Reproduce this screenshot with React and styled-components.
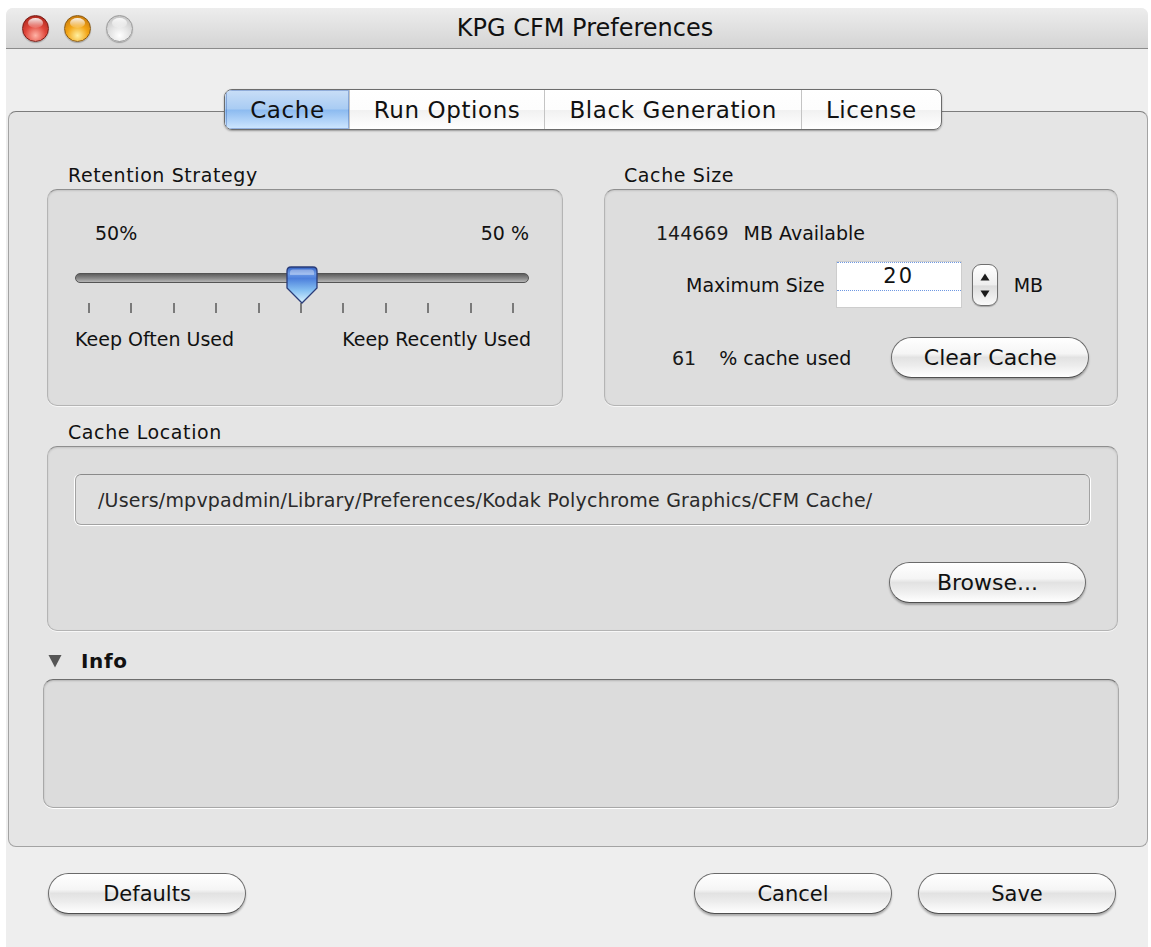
import React from "react";
import styled, { createGlobalStyle } from "styled-components";

const GlobalStyle = createGlobalStyle`
  html, body { margin: 0; padding: 0; background: #ffffff; overflow: hidden; }
  body { font-family: "DejaVu Sans", "Liberation Sans", sans-serif; color: #111; }
  * { box-sizing: border-box; }
`;

const Window = styled.div`
  margin: 8px 0 0 6px;
  width: 1142px;
  height: 960px;
  display: flex;
  flex-direction: column;
  background: #eeeeee;
  border-radius: 7px 7px 0 0;
  overflow: hidden;
`;

const TitleBar = styled.div`
  flex: none;
  height: 41px;
  display: grid;
  grid-template-columns: 1fr auto 1fr;
  align-items: center;
  padding-left: 16px;
  background: linear-gradient(#ededed, #d4d4d4);
  border-bottom: 1px solid #8b8b8b;
`;

const Lights = styled.div`
  display: flex;
  gap: 15px;
`;

const lightColors = {
  close: ["#ffb3a6", "#e0473b", "#9c1c12", "#7a1c16"],
  minimize: ["#fff0a0", "#f3a515", "#b86a08", "#8a5a12"],
  zoom: ["#ffffff", "#e2e2e2", "#b9b9b9", "#9a9a9a"],
};

const Light = styled.span`
  position: relative;
  width: 27px;
  height: 27px;
  border-radius: 50%;
  border: 1px solid ${(p) => lightColors[p.$kind][3]};
  background: radial-gradient(
    circle at 50% 78%,
    ${(p) => lightColors[p.$kind][0]} 0%,
    ${(p) => lightColors[p.$kind][1]} 45%,
    ${(p) => lightColors[p.$kind][2]} 100%
  );
  box-shadow: 0 1px 1px rgba(0, 0, 0, 0.25);
  &::after {
    content: "";
    position: absolute;
    left: 5px;
    right: 5px;
    top: 2px;
    height: 10px;
    border-radius: 50%;
    background: linear-gradient(rgba(255, 255, 255, 0.9), rgba(255, 255, 255, 0.1));
  }
`;

const Title = styled.div`
  font-size: 24px;
  color: #111;
`;

const Content = styled.div`
  flex: 1;
  display: flex;
  flex-direction: column;
  padding-top: 40px;
`;

const TabStrip = styled.div`
  position: relative;
  z-index: 1;
  align-self: center;
  margin-left: 12px;
  display: flex;
  height: 41px;
  border: 1px solid #6c6c6c;
  border-radius: 8px;
  overflow: hidden;
  box-shadow: 0 1px 2px rgba(0, 0, 0, 0.35);
  background: linear-gradient(#ffffff, #fdfdfd 50%, #f1f1f1 51%, #ffffff);
`;

const Tab = styled.div`
  display: flex;
  align-items: center;
  padding: 0 24px;
  font-size: 23px;
  letter-spacing: 0.6px;
  color: #111;
  border-left: 1px solid ${(p) => (p.$first ? "transparent" : "#c4c4c4")};
  ${(p) =>
    p.$active &&
    `
    background: linear-gradient(#c9def7 0%, #a9ccf3 48%, #8dbbf0 52%, #cfe7ff 100%);
    border-left-color: transparent;
    box-shadow: inset 0 0 0 1px rgba(40, 80, 160, 0.35);
  `}
`;

const Pane = styled.div`
  margin: -19px 0 0 2px;
  border: 1px solid #a3a3a3;
  border-top-color: #7c7c7c;
  border-radius: 8px;
  background: #e5e5e5;
  padding: 52px 29px 38px 38px;
  display: flex;
  flex-direction: column;
`;

const TopRow = styled.div`
  display: grid;
  grid-template-columns: 516px 514px;
  column-gap: 41px;
`;

const Group = styled.div`
  display: flex;
  flex-direction: column;
  margin-top: ${(p) => p.$top || 0}px;
`;

const GroupLabel = styled.div`
  font-size: 19px;
  letter-spacing: 0.6px;
  line-height: 22px;
  color: #111;
  padding-left: ${(p) => p.$indent || 21}px;
  margin-bottom: 3px;
`;

const Box = styled.div`
  height: ${(p) => p.$h}px;
  background: #dddddd;
  border: 1px solid #b4b4b4;
  border-top-color: #8f8f8f;
  border-radius: 10px;
  box-shadow: inset 0 1px 2px rgba(0, 0, 0, 0.12), 0 1px 0 rgba(255, 255, 255, 0.7);
  display: flex;
  flex-direction: column;
`;

/* Retention strategy slider */

const PercentRow = styled.div`
  display: flex;
  justify-content: space-between;
  font-size: 19px;
  line-height: 22px;
  padding: 32px 33px 0 47px;
`;

const SliderArea = styled.div`
  position: relative;
  margin: 22px 33px 0 27px;
  height: 50px;
`;

const Track = styled.div`
  margin-top: 7px;
  height: 10px;
  border-radius: 5px;
  border: 1px solid #545454;
  background: linear-gradient(#5e5e5e, #8b8b8b 55%, #b6b6b6);
`;

const Ticks = styled.div`
  display: flex;
  justify-content: space-between;
  margin-top: 20px;
  padding: 0 15px 0 13px;
`;

const Tick = styled.span`
  width: 2px;
  height: 10px;
  background: #7a7a7a;
`;

const ThumbWrap = styled.div`
  position: absolute;
  top: 0;
  width: 32px;
  height: 38px;
  margin-left: -16px;
`;

const SliderLabels = styled.div`
  display: flex;
  justify-content: space-between;
  font-size: 19px;
  line-height: 22px;
  padding: 12px 31px 0 27px;
`;

/* Cache size controls */

const InfoRow = styled.div`
  display: flex;
  align-items: center;
  gap: ${(p) => p.$gap || 0}px;
  padding-left: ${(p) => p.$indent}px;
  margin-top: ${(p) => p.$top}px;
  font-size: 19px;
  line-height: 22px;
`;

const Strong = styled.span`
  font-size: 19px;
  color: #1a1a1a;
`;

const NumberField = styled.div`
  width: 124px;
  height: 45px;
  margin-left: 12px;
  background: #ffffff;
  border-top: 1px dotted #6f98e2;
  box-shadow: 0 0 0 1px rgba(160, 160, 160, 0.25);
  display: flex;
  flex-direction: column;
`;

const FieldValue = styled.div`
  height: 28px;
  text-align: center;
  font-size: 21px;
  line-height: 26px;
  letter-spacing: 2px;
  border-bottom: 1px dotted #6f98e2;
`;

const Stepper = styled.div`
  width: 26px;
  height: 42px;
  margin: 0 16px 0 11px;
  border: 1px solid #6f6f6f;
  border-radius: 9px;
  background: linear-gradient(#ffffff, #eeeeee 50%, #dcdcdc 52%, #fafafa);
  box-shadow: 0 1px 1px rgba(0, 0, 0, 0.25);
  display: flex;
  flex-direction: column;
  align-items: center;
  justify-content: space-between;
  padding: 8px 0 7px;
`;

const AquaButton = styled.button`
  width: ${(p) => p.$w || 198}px;
  height: ${(p) => p.$h || 41}px;
  border: 1px solid #6a6a6a;
  border-bottom-color: #4f4f4f;
  border-radius: 21px;
  background: linear-gradient(
    #ffffff 0%,
    #f5f5f5 40%,
    #e2e2e2 50%,
    #ececec 70%,
    #ffffff 100%
  );
  box-shadow: 0 2px 2px rgba(0, 0, 0, 0.28), inset 0 0 2px rgba(255, 255, 255, 0.9);
  font-family: "DejaVu Sans", "Liberation Sans", sans-serif;
  font-size: ${(p) => p.$fs || 22}px;
  color: #111;
  padding: 0;
  margin-left: ${(p) => p.$ml || 0}px;
  cursor: default;
`;

/* Cache location */

const PathField = styled.div`
  margin: 27px 27px 0 27px;
  height: 51px;
  border: 1px solid #a2a2a2;
  border-top-color: #8a8a8a;
  border-radius: 6px;
  background: #dfdfdf;
  box-shadow: 0 1px 0 #ffffff, 1px 0 0 #ffffff, -1px 0 0 #ffffff;
  display: flex;
  align-items: center;
  padding-left: 22px;
  font-size: 19px;
  letter-spacing: 0.2px;
  color: #2a2a2a;
`;

const BrowseRow = styled.div`
  display: flex;
  justify-content: flex-end;
  padding: 37px 31px 0 0;
`;

/* Info disclosure */

const InfoHeader = styled.div`
  display: flex;
  align-items: center;
  gap: 19px;
  margin: 19px 0 7px 1px;
  font-size: 20px;
  letter-spacing: 0.6px;
  font-weight: bold;
  line-height: 22px;
`;

const InfoBox = styled.div`
  margin: 0 -1px 0 -4px;
  height: 129px;
  background: #dcdcdc;
  border: 1px solid #a8a8a8;
  border-top-color: #6d6d6d;
  border-radius: 10px;
  box-shadow: inset 0 1px 2px rgba(0, 0, 0, 0.18), 0 1px 0 #ffffff;
`;

/* Bottom buttons */

const Footer = styled.div`
  display: flex;
  align-items: center;
  padding: 26px 32px 0 42px;
`;

const Spacer = styled.div`
  flex: 1;
`;

function SliderThumb() {
  return (
    <svg width="32" height="38" viewBox="0 0 32 38">
      <defs>
        <linearGradient id="thumbFill" x1="0" y1="0" x2="0" y2="1">
          <stop offset="0" stopColor="#2f5fc4" />
          <stop offset="0.18" stopColor="#6d9ae6" />
          <stop offset="0.32" stopColor="#4d80dc" />
          <stop offset="0.65" stopColor="#86c0f2" />
          <stop offset="1" stopColor="#dcf4ff" />
        </linearGradient>
      </defs>
      <path
        d="M5 1 H27 Q31 1 31 5 V22 L16 37 L1 22 V5 Q1 1 5 1 Z"
        fill="url(#thumbFill)"
        stroke="#2a3c78"
        strokeWidth="1.3"
      />
      <path d="M7 3.5 H25 Q28 3.5 28 6.5 V9 H4 V6.5 Q4 3.5 7 3.5 Z" fill="rgba(255,255,255,0.35)" />
    </svg>
  );
}

function Arrow({ up }) {
  return (
    <svg width="10" height="8" viewBox="0 0 10 8">
      <path d={up ? "M5 0.5 L9.5 7.5 H0.5 Z" : "M0.5 0.5 H9.5 L5 7.5 Z"} fill="#1a1a1a" />
    </svg>
  );
}

function Disclosure() {
  return (
    <svg width="14" height="14" viewBox="0 0 14 14">
      <path d="M0.5 1 H13.5 L7 13.5 Z" fill="#555555" />
    </svg>
  );
}

const tabs = ["Cache", "Run Options", "Black Generation", "License"];
const sliderValue = 0.5;

export default function App() {
  return (
    <>
      <GlobalStyle />
      <Window>
        <TitleBar>
          <Lights>
            <Light $kind="close" />
            <Light $kind="minimize" />
            <Light $kind="zoom" />
          </Lights>
          <Title>KPG CFM Preferences</Title>
          <div />
        </TitleBar>

        <Content>
          <TabStrip>
            {tabs.map((t, i) => (
              <Tab key={t} $first={i === 0} $active={i === 0}>
                {t}
              </Tab>
            ))}
          </TabStrip>

          <Pane>
            <TopRow>
              <Group>
                <GroupLabel>Retention Strategy</GroupLabel>
                <Box $h={217}>
                  <PercentRow>
                    <span>50%</span>
                    <span>50 %</span>
                  </PercentRow>
                  <SliderArea>
                    <Track />
                    <Ticks>
                      {Array.from({ length: 11 }).map((_, i) => (
                        <Tick key={i} />
                      ))}
                    </Ticks>
                    <ThumbWrap style={{ left: `${sliderValue * 100}%` }}>
                      <SliderThumb />
                    </ThumbWrap>
                  </SliderArea>
                  <SliderLabels>
                    <span>Keep Often Used</span>
                    <span>Keep Recently Used</span>
                  </SliderLabels>
                </Box>
              </Group>

              <Group>
                <GroupLabel $indent={20}>Cache Size</GroupLabel>
                <Box $h={217}>
                  <InfoRow $indent={51} $top={32} $gap={15}>
                    <Strong>144669</Strong>
                    <span>MB Available</span>
                  </InfoRow>
                  <InfoRow $indent={81} $top={18}>
                    <span>Maximum Size</span>
                    <NumberField>
                      <FieldValue>20</FieldValue>
                    </NumberField>
                    <Stepper>
                      <Arrow up />
                      <Arrow />
                    </Stepper>
                    <span>MB</span>
                  </InfoRow>
                  <InfoRow $indent={67} $top={30} $gap={23}>
                    <Strong>61</Strong>
                    <span>% cache used</span>
                    <AquaButton $w={198} $h={41} $ml={17}>
                      Clear Cache
                    </AquaButton>
                  </InfoRow>
                </Box>
              </Group>
            </TopRow>

            <Group $top={15}>
              <GroupLabel>Cache Location</GroupLabel>
              <Box $h={185}>
                <PathField>
                  /Users/mpvpadmin/Library/Preferences/Kodak Polychrome Graphics/CFM Cache/
                </PathField>
                <BrowseRow>
                  <AquaButton $w={197} $h={41}>
                    Browse...
                  </AquaButton>
                </BrowseRow>
              </Box>
            </Group>

            <InfoHeader>
              <Disclosure />
              <span>Info</span>
            </InfoHeader>
            <InfoBox />
          </Pane>

          <Footer>
            <AquaButton $fs={21}>Defaults</AquaButton>
            <Spacer />
            <AquaButton $fs={21}>Cancel</AquaButton>
            <AquaButton $fs={21} $ml={26}>
              Save
            </AquaButton>
          </Footer>
        </Content>
      </Window>
    </>
  );
}
